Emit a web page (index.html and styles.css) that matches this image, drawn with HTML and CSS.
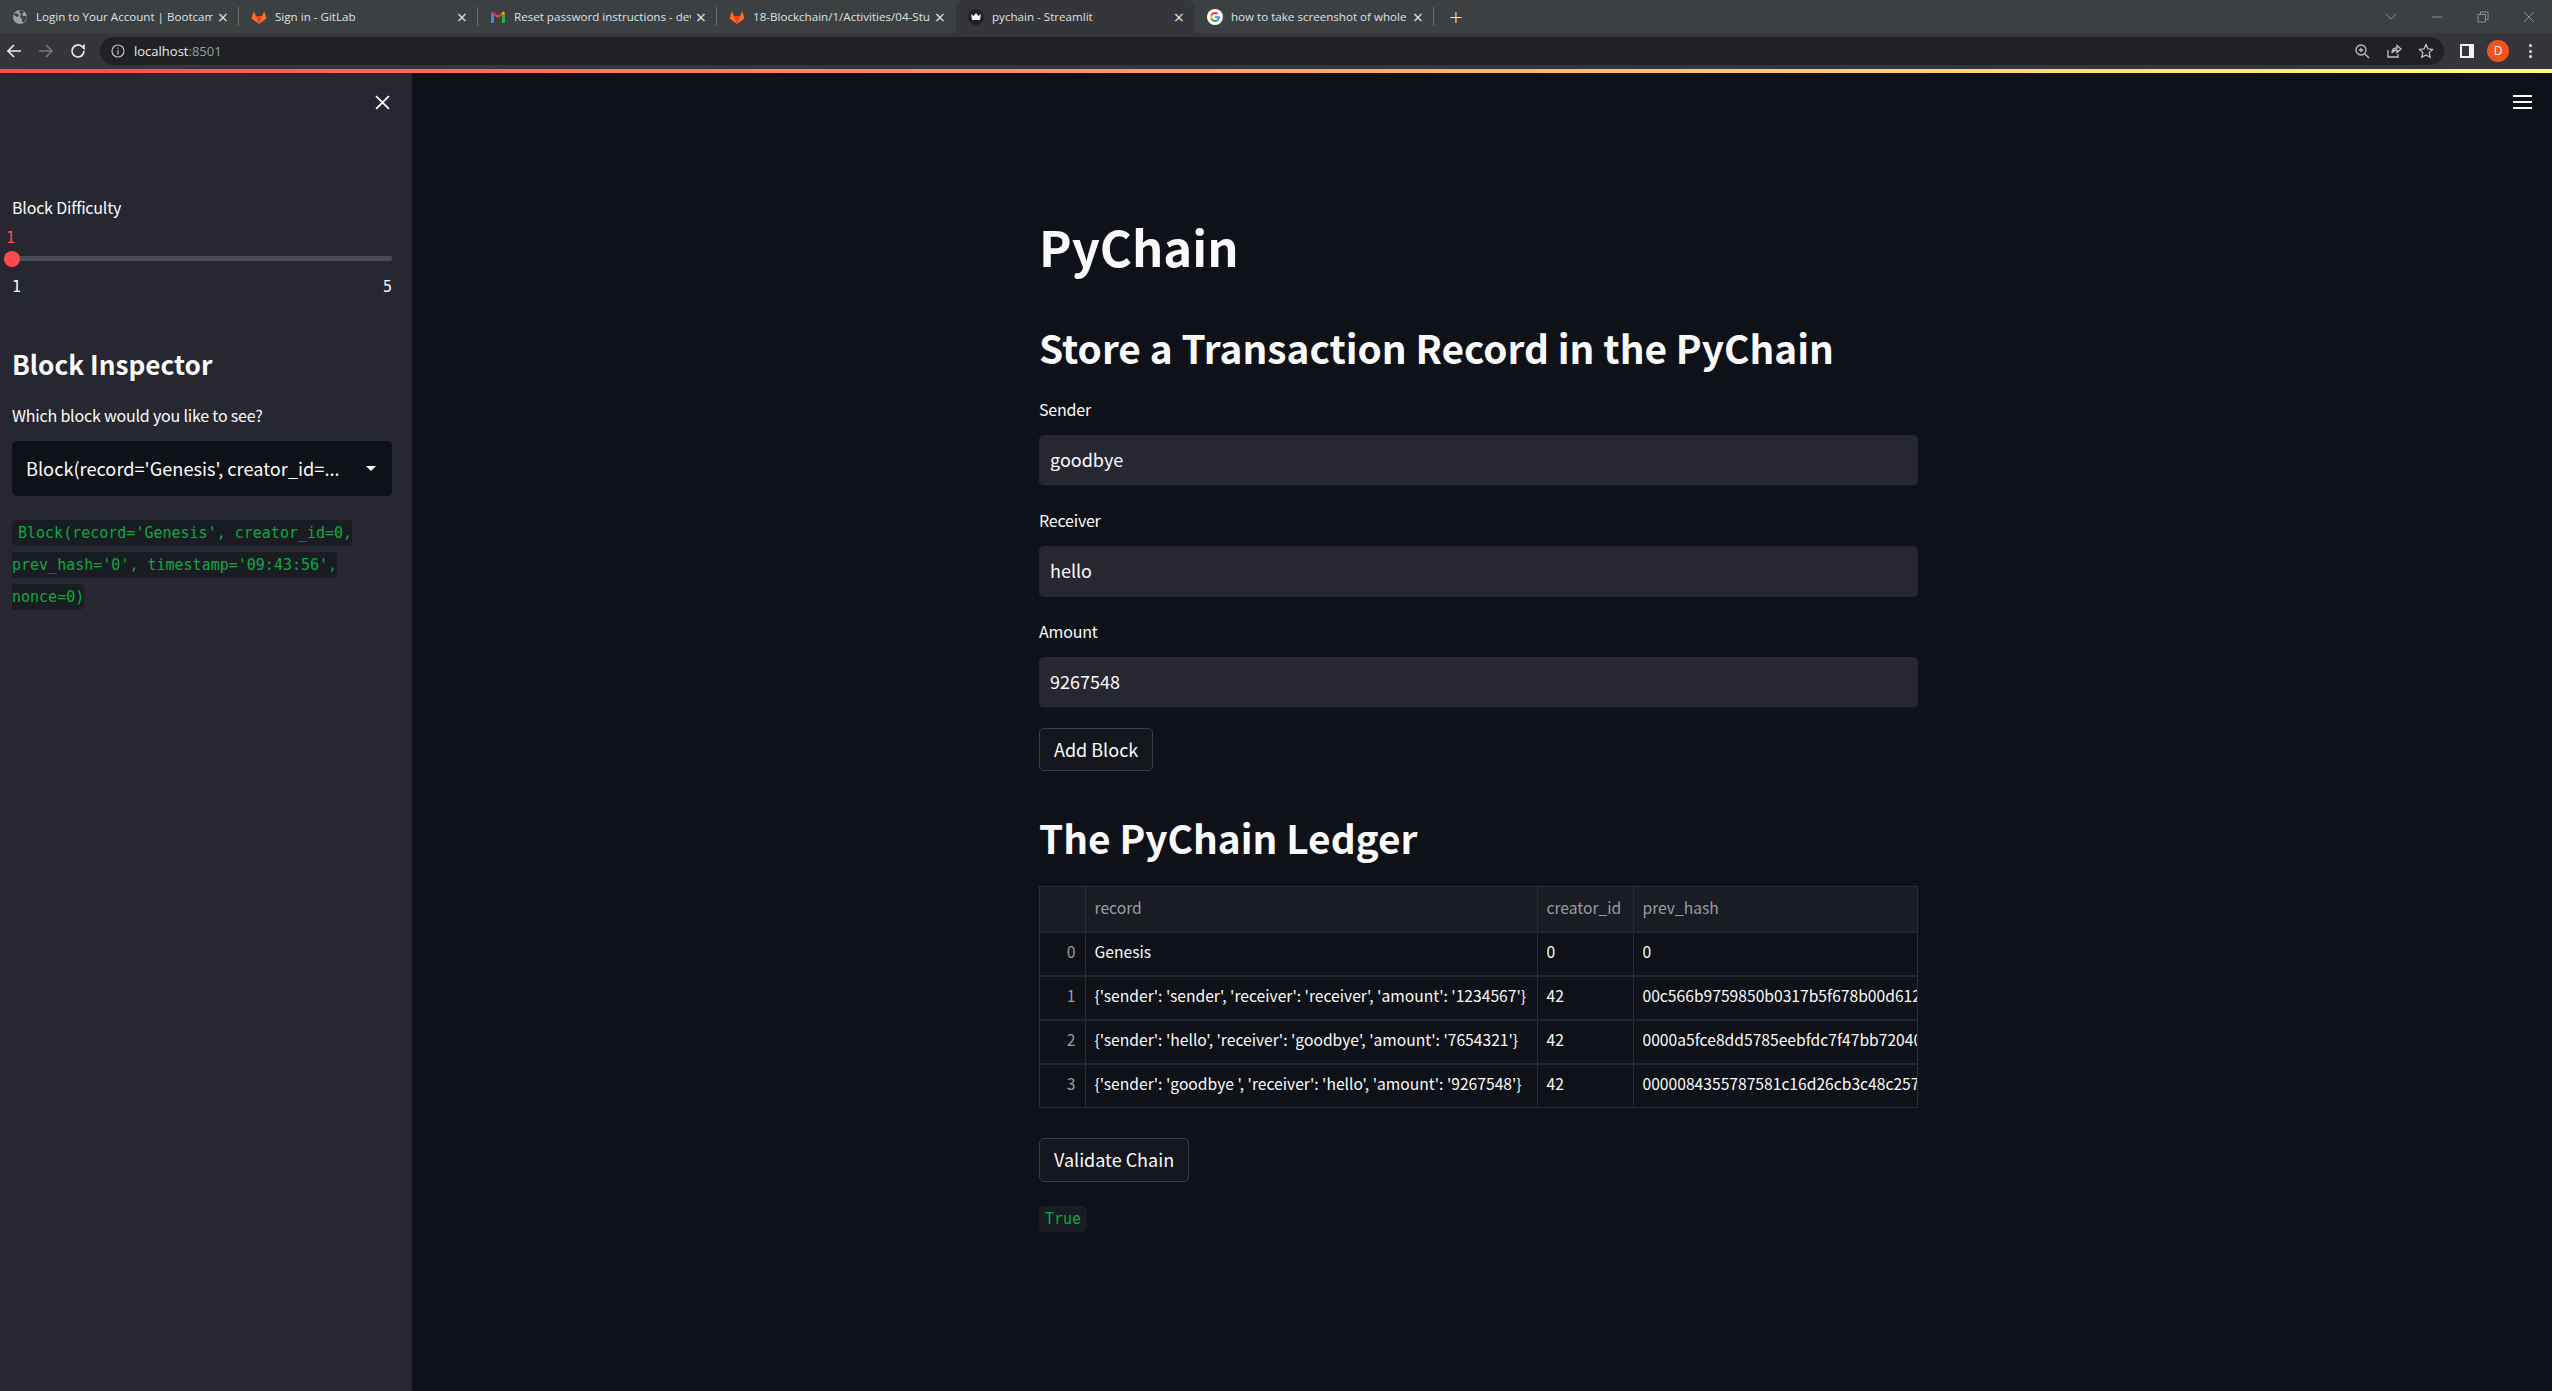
FILE: index.html
```html
<!DOCTYPE html>
<html lang="en">
<head>
  <meta charset="UTF-8" />
  <title>pychain - Streamlit</title>
  <link rel="stylesheet" href="styles.css">
</head>
<body>
  <!-- browser chrome -->
  <div class="tabstrip">
    <div class="tab">
      <svg class="favicon" viewBox="0 0 16 16"><circle cx="8" cy="8" r="7" fill="#9aa0a6"/><path d="M3 4l3 1 1 2-2 1-3-2zM9 1l3 2-2 2 1 2 3 0 1 2-3 4-2 0 0-3-2-2 1-3-2-2z" fill="#3c4043"/></svg>
      <span class="tab-title">Login to Your Account | Bootcamp</span>
      <span class="tab-close">&times;</span>
    </div>
    <div class="tab">
      <svg class="favicon" viewBox="0 0 16 16"><path d="M8 15L.5 9.500 2.800 2 5 7h6l2.200-5 2.300 7.500z" fill="#fc6d26"/><path d="M8 15L5 7h6z" fill="#e24329"/></svg>
      <span class="tab-title">Sign in - GitLab</span>
      <span class="tab-close">&times;</span>
    </div>
    <div class="tab">
      <svg class="favicon" viewBox="0 0 16 16"><path d="M1 14V4l3 2v8z" fill="#4285f4"/><path d="M12 14V6l3-2v10z" fill="#34a853"/><path d="M1 4l7 5 7-5-1.500-1.500L8 6.500 2.500 2.500z" fill="#ea4335"/><path d="M12 6l3-2-1.500-1.500L12 3.600z" fill="#fbbc04"/></svg>
      <span class="tab-title">Reset password instructions - dev</span>
      <span class="tab-close">&times;</span>
    </div>
    <div class="tab">
      <svg class="favicon" viewBox="0 0 16 16"><path d="M8 15L.5 9.500 2.800 2 5 7h6l2.200-5 2.300 7.500z" fill="#fc6d26"/><path d="M8 15L5 7h6z" fill="#e24329"/></svg>
      <span class="tab-title">18-Blockchain/1/Activities/04-Stu</span>
      <span class="tab-close">&times;</span>
    </div>
    <div class="tab active">
      <svg class="favicon" viewBox="0 0 16 16"><circle cx="8" cy="8" r="8" fill="#202124"/><path d="M3 5l2.500 2L8 4l2.500 3L13 5l-1 6H4z" fill="#f1f3f4"/></svg>
      <span class="tab-title">pychain - Streamlit</span>
      <span class="tab-close">&times;</span>
    </div>
    <div class="tab">
      <svg class="favicon" viewBox="0 0 16 16"><circle cx="8" cy="8" r="8" fill="#fff"/><path d="M12.800 8.200c0-.4 0-.7-.1-1H8v1.900h2.700c-.1.600-.5 1.200-1 1.500l1.500 1.200c.9-.8 1.600-2.100 1.600-3.600z" fill="#4285f4"/><path d="M8 13c1.300 0 2.400-.4 3.200-1.200l-1.500-1.200c-.4.300-1 .5-1.700.5-1.300 0-2.400-.9-2.800-2L3.600 10.300C4.400 11.900 6.100 13 8 13z" fill="#34a853"/><path d="M5.200 9.100c-.2-.7-.2-1.500 0-2.200L3.600 5.700c-.7 1.400-.7 3.200 0 4.600z" fill="#fbbc04"/><path d="M8 4.900c.7 0 1.400.3 1.900.7l1.400-1.400C10.400 3.400 9.300 3 8 3 6.100 3 4.400 4.100 3.600 5.700l1.600 1.200c.4-1.100 1.500-2 2.800-2z" fill="#ea4335"/></svg>
      <span class="tab-title">how to take screenshot of whole</span>
      <span class="tab-close">&times;</span>
    </div>
    <span class="new-tab">+</span>
    <div class="window-btns">
      <svg viewBox="0 0 14 14"><path d="M2 4l5 5 5-5" /></svg>
      <svg viewBox="0 0 14 14"><path d="M2 7h10" /></svg>
      <svg viewBox="0 0 14 14"><path d="M2 4.500h7.500V12H2zM4.500 4.500V2H12v7.500H9.500" /></svg>
      <svg viewBox="0 0 14 14"><path d="M2 2l10 10M12 2L2 12" /></svg>
    </div>
  </div>

  <div class="toolbar">
    <svg class="nav-icon" viewBox="0 0 16 16"><path d="M15 8H2M8 2L2 8l6 6" /></svg>
    <svg class="nav-icon dim" viewBox="0 0 16 16"><path d="M1 8h13M8 2l6 6-6 6" /></svg>
    <svg class="nav-icon" viewBox="0 0 16 16"><path d="M14 8a6 6 0 1 1-1.800-4.300L14 5.500V1.500" /></svg>
    <div class="urlbar">
      <svg class="url-info" viewBox="0 0 14 14"><circle cx="7" cy="7" r="6" /><path d="M7 6v4.500M7 3.500v1.200" /></svg>
      <span class="url-text">localhost<span class="url-port">:8501</span></span>
      <div class="url-actions">
        <svg viewBox="0 0 16 16"><circle cx="7" cy="7" r="5" /><path d="M11 11l4 4M7 4.800v4.400M4.800 7h4.400" /></svg>
        <svg viewBox="0 0 16 16"><path d="M2 7v7h10v-3M6 10c0-3 2-5 5-5V2.500L15 6l-4 3.500V7C9 7 7 8 6 10z" /></svg>
        <svg viewBox="0 0 16 16"><path d="M8 1.500l2 4.400 4.700.5-3.500 3.200 1 4.700L8 11.900l-4.200 2.400 1-4.700L1.300 6.400 6 5.900z" /></svg>
      </div>
    </div>
    <div class="panel-icon"><span></span></div>
    <div class="avatar">D</div>
    <div class="kebab"><span></span><span></span><span></span></div>
  </div>

  <div class="rainbow"></div>

  <!-- streamlit app -->
  <div class="app">
    <aside class="sidebar">
      <div class="sidebar-top">
        <svg class="close-x" viewBox="0 0 14 14"><path d="M1 1l12 12M13 1L1 13" /></svg>
      </div>
      <div class="field-label">Block Difficulty</div>
      <div class="slider-value">1</div>
      <div class="slider-track"><div class="slider-thumb"></div></div>
      <div class="slider-ticks"><span>1</span><span>5</span></div>
      <h2 class="side-title">Block Inspector</h2>
      <div class="field-label">Which block would you like to see?</div>
      <div class="select-box">
        <span class="select-text">Block(record='Genesis', creator_id=...</span>
        <span class="select-arrow"></span>
      </div>
      <p class="code-para"><code class="code first">Block(record='Genesis', creator_id=0, prev_hash='0', timestamp='09:43:56', nonce=0)</code></p>
    </aside>

    <main class="main">
      <button class="hamburger"><span></span><span></span><span></span></button>
      <div class="content">
        <h1 class="title">PyChain</h1>
        <h2 class="heading">Store a Transaction Record in the PyChain</h2>

        <label class="field-label main-label">Sender</label>
        <div class="text-input line">goodbye</div>
        <label class="field-label main-label">Receiver</label>
        <div class="text-input">hello</div>
        <label class="field-label main-label">Amount</label>
        <div class="text-input line">9267548</div>
        <button class="btn add-btn">Add Block</button>

        <h2 class="heading ledger">The PyChain Ledger</h2>
        <div class="table-wrap">
          <table class="ledger-table">
            <colgroup><col class="c-index"><col class="c-record"><col class="c-creator"><col class="c-hash"></colgroup>
            <thead>
              <tr><th></th><th>record</th><th>creator_id</th><th>prev_hash</th></tr>
            </thead>
            <tbody>
              <tr><td class="idx">0</td><td>Genesis</td><td>0</td><td>0</td></tr>
              <tr><td class="idx">1</td><td>{'sender': 'sender', 'receiver': 'receiver', 'amount': '1234567'}</td><td>42</td><td>00c566b9759850b0317b5f678b00d6120c1e</td></tr>
              <tr><td class="idx">2</td><td>{'sender': 'hello', 'receiver': 'goodbye', 'amount': '7654321'}</td><td>42</td><td>0000a5fce8dd5785eebfdc7f47bb72040c1e</td></tr>
              <tr><td class="idx">3</td><td>{'sender': 'goodbye ', 'receiver': 'hello', 'amount': '9267548'}</td><td>42</td><td>0000084355787581c16d26cb3c48c2570c1e</td></tr>
            </tbody>
          </table>
        </div>
        <button class="btn validate-btn">Validate Chain</button>
        <div class="result"><code class="code true-code">True</code></div>
      </div>
    </main>
  </div>
</body>
</html>
```

FILE: styles.css
```css
* {
  box-sizing: border-box;
}
html, body {
  margin: 0;
  height: 100%;
  overflow: hidden;
}
body {
  display: flex;
  flex-direction: column;
  background: #0e1117;
  color: #fafafa;
  font-family: "Noto Sans CJK JP", "Noto Sans", sans-serif;
}

/* browser chrome */
.tabstrip {
  display: flex;
  align-items: center;
  height: 33px;
  background: #3c4043;
  font-family: "Open Sans", sans-serif;
}
.tab {
  display: flex;
  align-items: center;
  width: 239px;
  height: 33px;
  padding-left: 12px;
  flex-shrink: 0;
}
.tab::after {
  content: "";
  width: 1px;
  height: 19px;
  margin-left: 7px;
  background: #6a6d71;
}
.tab:nth-child(4)::after,
.tab:nth-child(5)::after {
  background: transparent;
}
.tab.active {
  background: #35363a;
  border-radius: 8px 8px 0 0;
}
.favicon {
  width: 16px;
  height: 16px;
  flex-shrink: 0;
  margin-right: 8px;
}
.tab-title {
  flex: 1;
  padding-bottom: 1px;
  font-size: 11.6px;
  color: #dee1e6;
  white-space: nowrap;
  overflow: hidden;
  min-width: 0;
}
.tab-close {
  width: 16px;
  text-align: center;
  font-size: 18px;
  line-height: 16px;
  color: #dee1e6;
  margin-left: 2px;
}
.new-tab {
  margin-left: 15px;
  font-size: 24px;
  line-height: 24px;
  font-weight: 300;
  color: #dee1e6;
}
.window-btns {
  display: flex;
  gap: 32px;
  margin-left: auto;
  padding-right: 16px;
}
.window-btns svg {
  width: 14px;
  height: 14px;
  fill: none;
  stroke: #8a8d91;
  stroke-width: 1;
}

.toolbar {
  display: flex;
  align-items: center;
  height: 36px;
  padding: 0 20px 0 6px;
  background: #35363a;
}
.nav-icon {
  width: 16px;
  height: 16px;
  margin-right: 16px;
  fill: none;
  stroke: #e8eaed;
  stroke-width: 1.7;
  flex-shrink: 0;
}
.nav-icon.dim {
  stroke: #75787c;
}
.urlbar {
  display: flex;
  align-items: center;
  flex: 1;
  height: 28px;
  margin-left: -2px;
  padding: 0 10px 0 11px;
  background: #202124;
  border-radius: 14px;
}
.url-info {
  width: 14px;
  height: 14px;
  fill: none;
  stroke: #bdc1c6;
  stroke-width: 1.2;
  margin-right: 9px;
}
.url-text {
  font-family: "Open Sans", sans-serif;
  font-size: 13px;
  color: #e8eaed;
}
.url-port {
  color: #9aa0a6;
}
.url-actions {
  display: flex;
  gap: 16px;
  margin-left: auto;
}
.url-actions svg {
  width: 16px;
  height: 16px;
  fill: none;
  stroke: #bdc1c6;
  stroke-width: 1.3;
}
.panel-icon {
  width: 14px;
  height: 14px;
  margin-left: 16px;
  border: 2px solid #f1f3f4;
  background: #f1f3f4;
}
.panel-icon span {
  display: block;
  width: 7px;
  height: 10px;
  background: #35363a;
}
.avatar {
  width: 22px;
  height: 22px;
  margin-left: 13px;
  border-radius: 50%;
  background: #f4511e;
  color: #fff;
  font-family: "Open Sans", sans-serif;
  font-size: 12px;
  line-height: 22px;
  text-align: center;
}
.kebab {
  display: flex;
  flex-direction: column;
  gap: 2.5px;
  margin-left: 20px;
}
.kebab span {
  width: 3px;
  height: 3px;
  border-radius: 50%;
  background: #e8eaed;
}
.rainbow {
  height: 4px;
  background: linear-gradient(90deg, #ff4b4b, #fffd80);
}

/* app */
.app {
  display: flex;
  flex: 1;
  min-height: 0;
}
.sidebar {
  width: 412px;
  flex-shrink: 0;
  padding: 0 20px 0 12px;
  background: #262730;
}
.sidebar-top {
  display: flex;
  justify-content: flex-end;
  height: 122px;
  padding: 22px 2px 0 0;
}
.close-x {
  width: 15px;
  height: 15px;
  fill: none;
  stroke: #fafafa;
  stroke-width: 1.7;
}
.field-label {
  display: block;
  font-size: 16px;
  line-height: 24px;
  letter-spacing: -0.2px;
}
.slider-value {
  margin: 9px 0 0 -6px;
  font-family: "DejaVu Sans Mono", monospace;
  font-size: 15px;
  line-height: 20px;
  color: #ff4b4b;
}
.slider-track {
  display: flex;
  align-items: center;
  height: 5px;
  margin-top: 8px;
  background: #4a4b57;
  border-radius: 2px;
}
.slider-thumb {
  width: 16px;
  height: 16px;
  margin-left: -8px;
  border-radius: 50%;
  background: #ff4b4b;
  flex-shrink: 0;
}
.slider-ticks {
  display: flex;
  justify-content: space-between;
  margin-top: 16px;
  font-family: "DejaVu Sans Mono", monospace;
  font-size: 15px;
  line-height: 20px;
}
.side-title {
  margin: 46.5px 0 0;
  font-size: 26.2px;
  line-height: 40px;
  font-weight: 600;
}
.side-title + .field-label {
  margin-top: 19.5px;
}
.select-box {
  display: flex;
  align-items: center;
  justify-content: space-between;
  height: 55px;
  margin-top: 14px;
  padding: 0 16px 0 14px;
  background: #0e1117;
  border-radius: 5px;
}
.select-text {
  padding-bottom: 1px;
  font-size: 18.2px;
  white-space: nowrap;
}
.select-arrow {
  width: 0;
  height: 0;
  border-left: 5px solid transparent;
  border-right: 5px solid transparent;
  border-top: 5px solid #fafafa;
}
.code-para {
  margin: 21px 0 0;
  font-family: "DejaVu Sans Mono", monospace;
  font-size: 15px;
  line-height: 32px;
}
.code {
  padding: 4px 0;
  background: #1a1c24;
  color: #09ab3b;
  font-family: "DejaVu Sans Mono", monospace;
  font-size: 15px;
  border-radius: 5px;
}
.code.first {
  padding-left: 6px;
}

.main {
  display: flex;
  flex: 1;
  justify-content: center;
  position: relative;
  min-width: 0;
  padding-right: 7px;
}
.hamburger {
  position: absolute;
  top: 22px;
  right: 20px;
  display: flex;
  flex-direction: column;
  gap: 4px;
  padding: 0;
  border: none;
  background: none;
}
.hamburger span {
  width: 19px;
  height: 2px;
  background: #fafafa;
}
.content {
  width: 879px;
}
.title {
  margin: 137px 0 0;
  font-size: 49px;
  line-height: 72px;
  font-weight: 700;
}
.heading {
  margin: 35px 0 0;
  font-size: 38.8px;
  line-height: 60px;
  font-weight: 600;
  white-space: nowrap;
}
.heading + .main-label {
  margin-top: 20px;
}
.text-input {
  height: 51px;
  margin: 13.5px 0 22.5px;
  padding: 0 11px;
  background: #262730;
  border-radius: 5px;
  font-size: 18px;
  line-height: 48px;
}
.text-input.line {
  border-bottom: 1px solid #1a1b22;
}
.btn {
  display: block;
  padding: 0 14px 2px;
  height: 44px;
  background: #13161d;
  border: 1px solid #3b3d46;
  border-radius: 5px;
  color: #fafafa;
  font-family: inherit;
  font-size: 18px;
}
.add-btn {
  margin-top: -2px;
  height: 43px;
}
.heading.ledger {
  margin-top: 36px;
}
.table-wrap {
  height: 222px;
  margin-top: 19px;
  border: 1px solid #2a2c33;
  overflow: hidden;
}
.ledger-table {
  width: 877px;
  table-layout: fixed;
  border-collapse: collapse;
  font-size: 15.65px;
}
.c-index { width: 45px; }
.c-record { width: 452px; }
.c-creator { width: 96px; }
.ledger-table th,
.ledger-table td {
  padding: 0 9px 6px;
  border-left: 1px solid #2a2c33;
  border-bottom: 2px solid #23252c;
  overflow: hidden;
  white-space: nowrap;
  text-align: left;
}
.ledger-table th:first-child,
.ledger-table td:first-child {
  border-left: none;
}
.ledger-table th {
  height: 45px;
  padding-bottom: 3px;
  background: #1a1c24;
  color: #9a9ca3;
  font-weight: 400;
}
.ledger-table td {
  height: 44px;
}
.ledger-table tr:last-child td {
  height: 45px;
  padding-bottom: 7px;
  border-bottom: none;
}
.ledger-table .idx {
  color: #9a9ca3;
  text-align: right;
}
.validate-btn {
  margin-top: 30px;
}
.result {
  margin-top: 25px;
  font-family: "DejaVu Sans Mono", monospace;
  font-size: 15px;
  line-height: 25px;
}
.true-code {
  padding: 4px 6px;
}
```
